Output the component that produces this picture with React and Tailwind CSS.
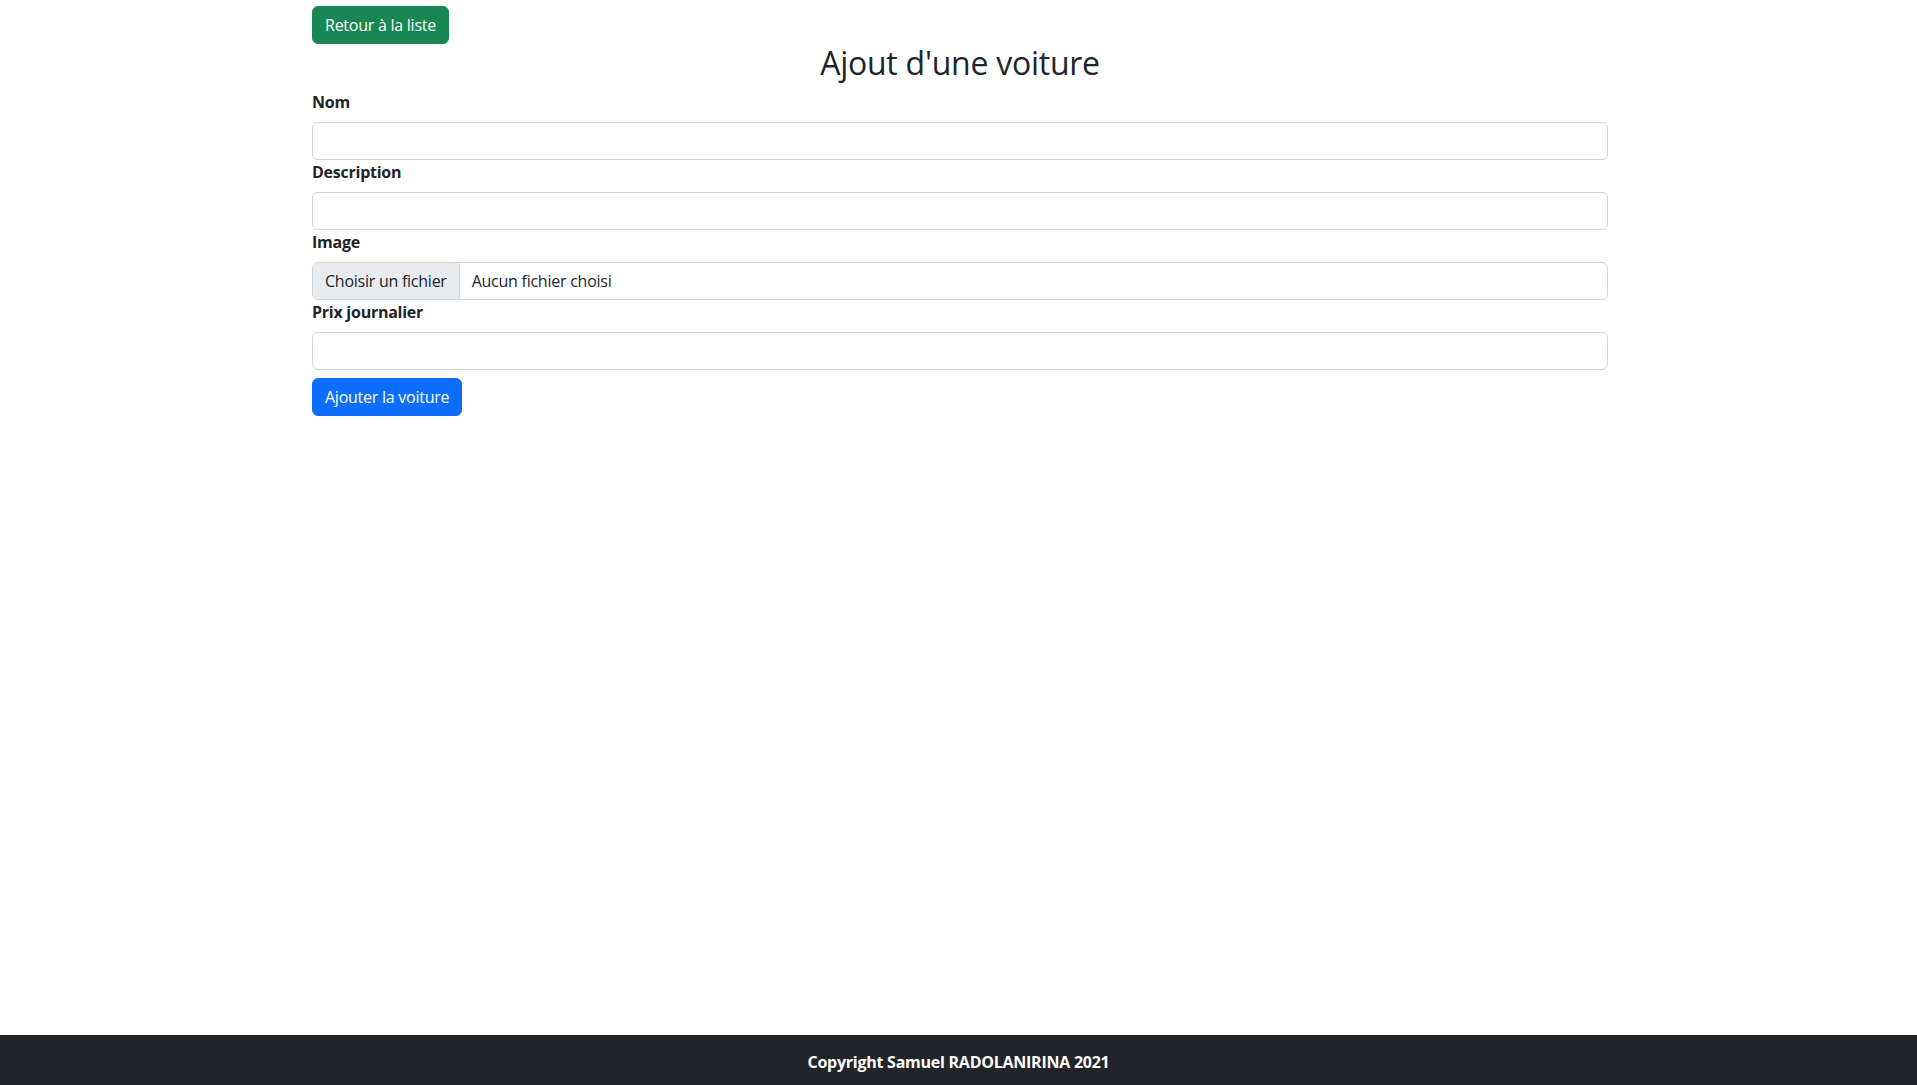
export default function App() {
  return (
    <div className="min-h-screen bg-white pl-[3px] text-[#212529] font-['Open_Sans',sans-serif] text-base leading-6 tracking-[-0.25px]">
      <div className="mx-auto w-[1296px] pt-[6px]">
        <button className="rounded-md border border-[#198754] bg-[#198754] px-3 py-[6px] text-white">
          Retour à la liste
        </button>

        <h2 className="mb-2 text-center text-[32px] font-medium leading-[1.2]">Ajout d'une voiture</h2>

        <form>
          <label className="mb-2 block font-bold">Nom</label>
          <input type="text" className="block h-[38px] w-full rounded-md border border-[#ced4da] px-3 outline-none" />

          <label className="mb-2 block font-bold">Description</label>
          <input type="text" className="block h-[38px] w-full rounded-md border border-[#ced4da] px-3 outline-none" />

          <label className="mb-2 block font-bold">Image</label>
          <div className="flex h-[38px] w-full overflow-hidden rounded-md border border-[#ced4da]">
            <span className="flex items-center border-r border-[#ced4da] bg-[#e9ecef] px-3">Choisir un fichier</span>
            <span className="flex items-center px-3">Aucun fichier choisi</span>
          </div>

          <label className="mb-2 block font-bold">Prix journalier</label>
          <input type="number" className="block h-[38px] w-full rounded-md border border-[#ced4da] px-3 outline-none" />

          <button type="button" className="mt-2 rounded-md border border-[#0d6efd] bg-[#0d6efd] px-3 py-[6px] text-white">
            Ajouter la voiture
          </button>
        </form>
      </div>

      <footer className="fixed bottom-0 left-0 right-0 flex h-[50px] items-center justify-center bg-[#212529] pt-[4px] font-bold text-white">
        Copyright Samuel RADOLANIRINA 2021
      </footer>
    </div>
  );
}
